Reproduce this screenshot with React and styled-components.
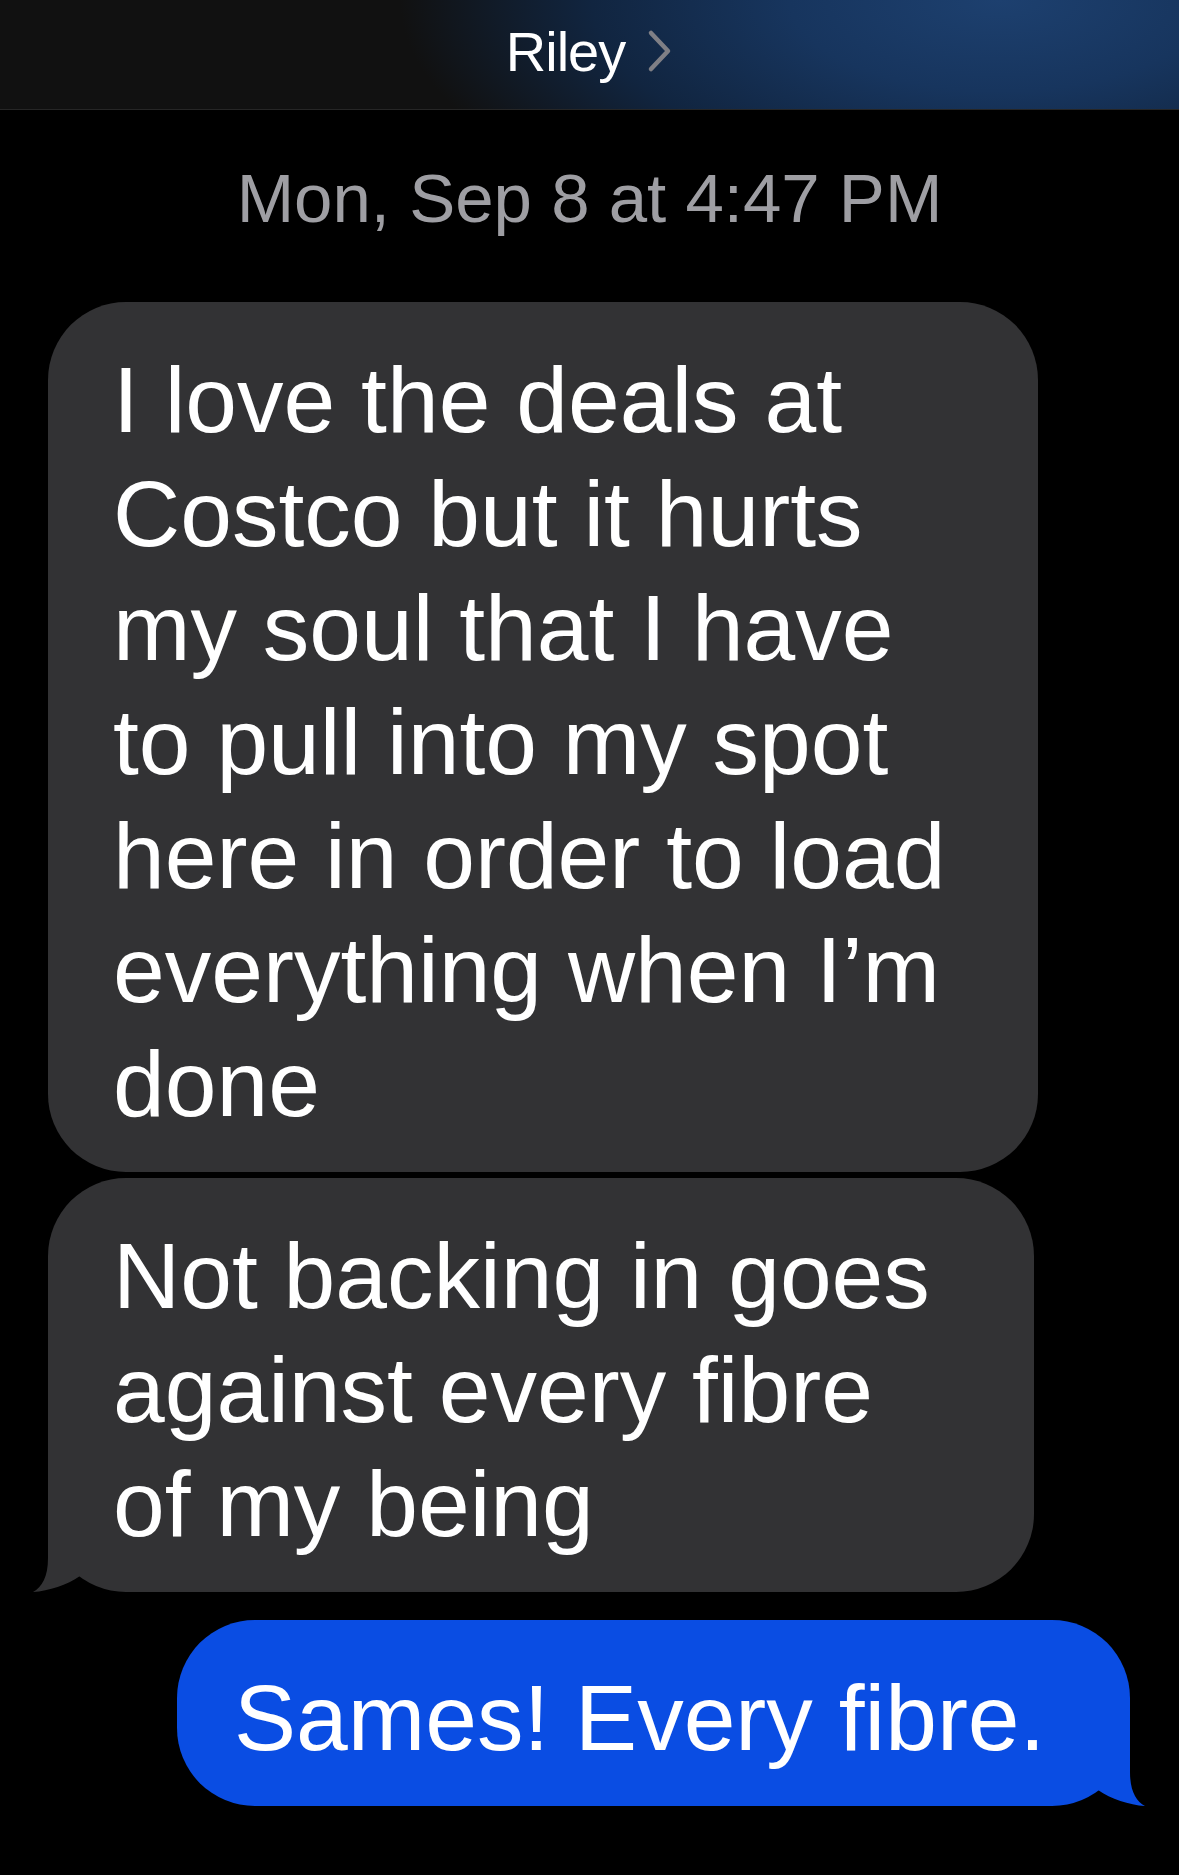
import styled, { createGlobalStyle } from "styled-components";

const GlobalStyle = createGlobalStyle`
  html, body {
    margin: 0;
    padding: 0;
    background: #000;
  }
  body {
    font-family: "Liberation Sans", Arial, sans-serif;
    -webkit-font-smoothing: antialiased;
  }
`;

const Screen = styled.div`
  width: 1179px;
  min-height: 1875px;
  background: #000;
  display: flex;
  flex-direction: column;
`;

const NavBar = styled.header`
  height: 110px;
  box-sizing: border-box;
  padding-top: 20px;
  display: flex;
  justify-content: center;
  align-items: flex-start;
  gap: 22px;
  border-bottom: 1px solid #262626;
  background:
    radial-gradient(
      ellipse 600px 260px at 1000px 0px,
      #1d406f 0%,
      #17355e 35%,
      #112540 68%,
      rgba(17, 17, 17, 0) 100%
    ),
    #111111;
`;

const ContactName = styled.span`
  font-size: 56px;
  line-height: 64px;
  color: #ffffff;
  letter-spacing: -1px;
`;

const Chevron = styled.svg`
  margin-top: 9px;
  width: 26px;
  height: 44px;
`;

const Stamp = styled.div`
  margin-top: 49px;
  text-align: center;
  font-size: 69px;
  line-height: 80px;
  color: #9e9ea3;
`;

const Thread = styled.div`
  display: flex;
  flex-direction: column;
  padding: 0 49px 0 48px;
`;

const Bubble = styled.div`
  position: relative;
  box-sizing: border-box;
  width: ${(p) => p.$width}px;
  margin-top: ${(p) => p.$gap}px;
  padding: 41px 0 31px ${(p) => p.$padLeft}px;
  align-self: ${(p) => (p.$outgoing ? "flex-end" : "flex-start")};
  border-radius: 78px;
  background: ${(p) => (p.$outgoing ? "#0a4de3" : "#323234")};
  color: #ffffff;
  font-size: 93px;
  line-height: 114px;
`;

const Line = styled.span`
  display: block;
  white-space: nowrap;
`;

const Tail = styled.svg`
  position: absolute;
  bottom: 0;
  width: 47px;
  height: 80px;
  ${(p) => (p.$outgoing ? "right: -15px; transform: scaleX(-1);" : "left: -15px;")}
`;

function Message({ lines, width, gap, padLeft, outgoing, tail }) {
  const fill = outgoing ? "#0a4de3" : "#323234";
  return (
    <Bubble $width={width} $gap={gap} $padLeft={padLeft} $outgoing={outgoing}>
      {lines.map((l) => (
        <Line key={l}>{l}</Line>
      ))}
      {tail && (
        <Tail $outgoing={outgoing} viewBox="0 0 47 80">
          <path
            d="M15 0 L15 46 C15 65 9 75 0 80 C16 79 34 73 47 64 L47 0 Z"
            fill={fill}
          />
        </Tail>
      )}
    </Bubble>
  );
}

export default function App() {
  return (
    <>
      <GlobalStyle />
      <Screen>
        <NavBar>
          <ContactName>Riley</ContactName>
          <Chevron viewBox="0 0 26 44">
            <path
              d="M4 4 L21 22 L4 40"
              fill="none"
              stroke="#7f7f85"
              strokeWidth="4.5"
              strokeLinecap="round"
              strokeLinejoin="round"
            />
          </Chevron>
        </NavBar>
        <Stamp>Mon, Sep 8 at 4:47 PM</Stamp>
        <Thread>
          <Message
            width={990}
            gap={63}
            padLeft={65}
            lines={[
              "I love the deals at",
              "Costco but it hurts",
              "my soul that I have",
              "to pull into my spot",
              "here in order to load",
              "everything when I’m",
              "done",
            ]}
          />
          <Message
            width={986}
            gap={6}
            padLeft={65}
            tail
            lines={["Not backing in goes", "against every fibre", "of my being"]}
          />
          <Message
            width={953}
            gap={28}
            padLeft={57}
            outgoing
            tail
            lines={["Sames! Every fibre."]}
          />
        </Thread>
      </Screen>
    </>
  );
}
